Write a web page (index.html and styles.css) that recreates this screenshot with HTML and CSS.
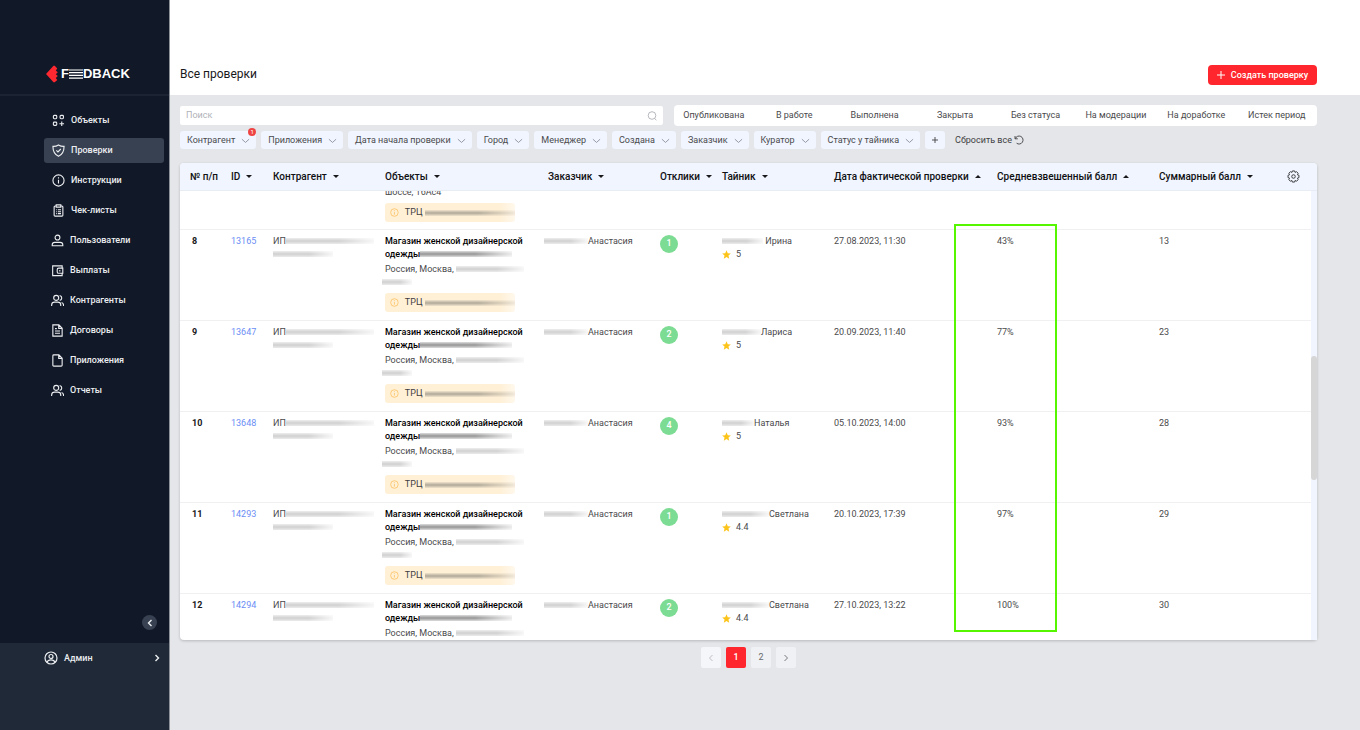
FILE: index.html
```html
<!DOCTYPE html>
<html lang="ru">
<head>
<meta charset="utf-8">
<title>Все проверки</title>
<link rel="stylesheet" href="styles.css">
</head>
<body>
<svg class="defs" width="0" height="0" aria-hidden="true">
  <symbol id="chev" viewBox="0 0 10 6"><path d="M1 1l4 3.600L9 1"/></symbol>
  <symbol id="users" viewBox="0 0 14 14"><circle cx="5.600" cy="4.200" r="2.700"/><path d="M.7 13v-1.200c0-1.900 1.500-3 3.200-3h3.400c1.700 0 3.200 1.100 3.200 3V13M9.300 1.600c1.600.3 2.300 1.300 2.300 2.600s-.7 2.300-2.200 2.700M11.400 9.200c1.400.5 2.100 1.400 2.100 2.800v1"/></symbol>
  <symbol id="info" viewBox="0 0 14 14"><circle cx="7" cy="7" r="6"/><path d="M7 6.300v4M7 3.500v1.400"/></symbol>
  <symbol id="star" viewBox="0 0 10 10"><path d="M5 .3l1.400 3.200 3.400.3-2.600 2.300.8 3.500L5 7.800 2 9.600l.8-3.500L.2 3.800l3.400-.3z"/></symbol>
</svg>
<div class="app">
  <aside class="sidebar">
    <div class="brand">
      <svg class="brand-mark" viewBox="0 0 12 18" aria-hidden="true"><path d="M0 9L7.500.8l1.200 0 2.600 2.600-1.500 2 2 1.900-2 1.900 2 1.900-2 1.800 1.500 2-2.600 2.300H7.500z" fill="#fd2830"/></svg>
      <span class="brand-name">F<svg class="brand-bars" viewBox="0 0 14 10" aria-hidden="true"><path d="M0 1h14M0 3.700h14M0 6.400h14M0 9.100h14" stroke="#fff" stroke-width="1.200"/></svg>DBACK</span>
    </div>
    <nav class="menu">
      <a class="item" href="#"><svg viewBox="0 0 14 14"><rect x="1.500" y="1.500" width="3.600" height="3.600" rx="1"/><rect x="8.700" y="1.500" width="3.600" height="3.600" rx="1"/><rect x="1.500" y="8.700" width="3.600" height="3.600" rx="1"/><path d="M10.500 8v5M8 10.500h5"/></svg>Объекты</a>
      <a class="item active" href="#"><svg viewBox="0 0 14 14"><path d="M7 1c2 1.300 4 1.700 6 1.600 0 5-1.600 8.500-6 10.700C2.600 11.100 1 7.600 1 2.600 3 2.700 5 2.300 7 1zM4.700 6.800L6.400 8.500 9.500 5.400"/></svg>Проверки</a>
      <a class="item" href="#"><svg><use href="#info"/></svg>Инструкции</a>
      <a class="item" href="#"><svg viewBox="0 0 14 14"><path d="M4.500 2.200H3.300c-.6 0-1 .4-1 1V12c0 .6.400 1 1 1h7.400c.6 0 1-.4 1-1V3.200c0-.6-.4-1-1-1H9.500M4.500 1h5v2.400h-5zM4.300 6.200h.8M6.300 6.200h3.400M4.300 8.300h.8M6.300 8.300h3.400M4.300 10.400h.8M6.300 10.400h3.400"/></svg>Чек-листы</a>
      <a class="item near" href="#"><svg viewBox="0 0 14 14"><circle cx="7" cy="3.800" r="2.600"/><path d="M1.300 12.600v-1c0-1.700 1.200-2.600 2.700-2.600h6c1.500 0 2.700.9 2.700 2.600v1z"/></svg>Пользователи</a>
      <a class="item near" href="#"><svg viewBox="0 0 14 14"><path d="M12 4.500V2H1.800v10.500H12V10M12.700 4.500H8.200c-1 0-1.500.6-1.500 1.500v2.500c0 .9.500 1.500 1.500 1.500h4.500zM9.500 6.500v1.500"/></svg>Выплаты</a>
      <a class="item near" href="#"><svg><use href="#users"/></svg>Контрагенты</a>
      <a class="item near" href="#"><svg viewBox="0 0 14 14"><path d="M2 1h6.500L12 4.500V13H2zM8.300 1v3.700H12M4.300 5h2M4.300 7.500h5.400M4.300 10h5.400"/></svg>Договоры</a>
      <a class="item near" href="#"><svg viewBox="0 0 14 14"><path d="M2 2c0-.6.400-1 1-1h5.500L12 4.500V12c0 .6-.4 1-1 1H3c-.6 0-1-.4-1-1zM8.300 1v3.700H12"/></svg>Приложения</a>
      <a class="item near" href="#"><svg><use href="#users"/></svg>Отчеты</a>
    </nav>
    <button class="collapse" aria-label="Свернуть меню"><svg viewBox="0 0 6 8"><path d="M4.500 1L1.500 4l3 3"/></svg></button>
    <div class="account">
      <a href="#"><svg class="avatar" viewBox="0 0 14 14"><circle cx="7" cy="7" r="6"/><circle cx="7" cy="5.500" r="2"/><path d="M3 11.300c.5-1.700 2-2.500 4-2.500s3.500.8 4 2.500"/></svg>Админ<svg class="arrow" viewBox="0 0 6 8"><path d="M1.500 1l3 3-3 3"/></svg></a>
    </div>
  </aside>
  <div class="page">
    <header class="top">
      <h1>Все проверки</h1>
      <button class="create"><svg viewBox="0 0 8 8"><path d="M4 0v8M0 4h8"/></svg>Создать проверку</button>
    </header>
    <main class="content">
      <div class="tools">
        <div class="search"><input type="text" placeholder="Поиск" aria-label="Поиск"><svg viewBox="0 0 10 10"><circle cx="5" cy="4.500" r="3.800"/><path d="M7.800 7.500l1.500 1.800"/></svg></div>
        <div class="statuses"><button>Опубликована</button><button>В работе</button><button>Выполнена</button><button>Закрыта</button><button>Без статуса</button><button>На модерации</button><button>На доработке</button><button>Истек период</button></div>
      </div>
      <div class="filters">
        <button class="filter">Контрагент<svg><use href="#chev"/></svg><span class="count">1</span></button>
        <button class="filter">Приложения<svg><use href="#chev"/></svg></button>
        <button class="filter">Дата начала проверки<svg><use href="#chev"/></svg></button>
        <button class="filter">Город<svg><use href="#chev"/></svg></button>
        <button class="filter">Менеджер<svg><use href="#chev"/></svg></button>
        <button class="filter">Создана<svg><use href="#chev"/></svg></button>
        <button class="filter">Заказчик<svg><use href="#chev"/></svg></button>
        <button class="filter">Куратор<svg><use href="#chev"/></svg></button>
        <button class="filter">Статус у тайника<svg><use href="#chev"/></svg></button>
        <button class="filter plus" aria-label="Добавить фильтр"><svg viewBox="0 0 8 8"><path d="M4 1v6M1 4h6"/></svg></button>
        <button class="reset">Сбросить все<svg viewBox="0 0 10 10"><path d="M1 1v2.800h2.800M1.300 3.600A4 4 0 1 1 2.600 8.200"/></svg></button>
      </div>
      <section class="card">
        <div class="scroller" id="scroller">
          <table>
            <colgroup><col class="c-num"><col class="c-id"><col class="c-firm"><col class="c-obj"><col class="c-firm"><col class="c-resp"><col class="c-firm"><col class="c-obj"><col class="c-avg"><col class="c-sum"><col class="c-gear"></colgroup>
            <thead><tr>
              <th>№ п/п</th><th>ID<i class="sort"></i></th><th>Контрагент<i class="sort"></i></th><th>Объекты<i class="sort"></i></th><th>Заказчик<i class="sort"></i></th><th>Отклики<i class="sort"></i></th><th>Тайник<i class="sort"></i></th><th>Дата фактической проверки<i class="sort up"></i></th><th>Средневзвешенный балл<i class="sort up"></i></th><th>Суммарный балл<i class="sort"></i></th>
              <th><button class="gear" aria-label="Настройки"><svg viewBox="0 0 14 14"><path d="M5.800 1h2.400l.5 1.600 1.600-.8 1.700 1.700-.8 1.600 1.700.6v2.500l-1.700.6.8 1.600-1.700 1.700-1.600-.8-.5 1.700H5.800l-.5-1.700-1.600.8L2 10.400l.8-1.600-1.700-.6V5.700l1.700-.6L2 3.500l1.700-1.700 1.600.8z"/><circle cx="7" cy="7" r="1.900"/></svg></button></th>
            </tr></thead>
            <tbody id="rows"></tbody>
          </table>
        </div>
        <div class="track"><div class="thumb"></div></div>
        <div class="highlight"></div>
      </section>
      <nav class="pager" aria-label="Страницы">
        <button class="off" aria-label="Назад"><svg viewBox="0 0 6 8"><path d="M4.500 1L1.500 4l3 3"/></svg></button>
        <button class="current">1</button>
        <button>2</button>
        <button aria-label="Вперёд"><svg viewBox="0 0 6 8"><path d="M1.500 1l3 3-3 3"/></svg></button>
      </nav>
    </main>
  </div>
</div>
<script src="rows.js"></script>
</body>
</html>
```
FILE: styles.css
```css
* { box-sizing: border-box; }
body { margin: 0; font: 9px/13px Roboto, "Noto Sans", sans-serif; color: #4a4a4c; background: #e5e6ea; }
button, input { font: inherit; color: inherit; border: 0; padding: 0; background: none; }
a { color: inherit; text-decoration: none; }
svg { fill: none; stroke: currentColor; }
.defs { position: absolute; }
.app { display: flex; height: 100vh; }

.sidebar { width: 170px; flex: none; display: flex; flex-direction: column; background: #111827; color: #eceef1; border-right: 1px solid #8d9199; }
.brand { height: 96px; display: flex; align-items: center; gap: 3px; padding: 54px 0 0 46px; border-bottom: 2px solid #1c2433; color: #fff; }
.brand-mark { width: 12px; height: 18px; stroke: none; }
.brand-name { display: flex; align-items: center; font: bold 13px/18px "Liberation Sans", sans-serif; }
.brand-bars { width: 14px; height: 10px; }
.menu { display: flex; flex-direction: column; gap: 5px; padding: 12px 5px 0 44px; }
.item { display: flex; align-items: center; gap: 6px; height: 25px; padding-left: 8px; border-radius: 3px; font-weight: 500; }
.item.near { padding-left: 7px; }
.item svg { width: 13px; height: 13px; stroke-width: 1.2; overflow: visible; }
.item.active { background: #374151; }
.collapse { align-self: flex-end; margin: auto 12px 13px 0; width: 15px; height: 15px; border-radius: 50%; background: #374151; display: grid; place-items: center; }
.collapse svg, .arrow { width: 6px; height: 8px; stroke-width: 1.4; }
.account { height: 87px; background: #1f2937; }
.account a { display: flex; align-items: center; gap: 6px; padding: 8px 9px 0 44px; font-weight: 500; }
.avatar { width: 14px; height: 14px; stroke-width: 1.2; }
.arrow { margin-left: auto; }

.page { flex: 1; min-width: 0; display: flex; flex-direction: column; }
.top { height: 95px; background: #fff; display: flex; align-items: flex-start; justify-content: space-between; padding: 65px 43px 0 10px; flex: none; }
.top h1 { margin: 1px 0 0; font-size: 12px; line-height: 16px; font-weight: 400; color: #18181b; }
.create { display: flex; align-items: center; justify-content: center; gap: 6px; height: 20px; width: 109px; border-radius: 4px; background: #ff262d; color: #fff; font-weight: 500; }
.create svg { width: 8px; height: 8px; }
.content { flex: 1; min-height: 0; display: flex; flex-direction: column; padding: 10px 43px 62px 10px; }
.tools { display: grid; grid-template-columns: 3fr 4fr; gap: 11px; align-items: center; height: 21px; }
.search { display: flex; align-items: center; height: 19px; padding: 0 6px; background: #fff; border-radius: 2px; }
.search input { flex: 1; min-width: 0; outline: 0; }
.search input::placeholder { color: #b0b2b8; }
.search svg { width: 10px; height: 10px; color: #a4a6ac; stroke-width: 0.8; }
.statuses { display: grid; grid-template-columns: repeat(8, 1fr); height: 21px; background: #fff; border-radius: 4px; }
.filters { display: flex; gap: 5px; margin-top: 5px; height: 18px; align-items: center; }
.filter { position: relative; display: flex; align-items: center; gap: 6px; height: 18px; padding: 0 6px 0 7px; border-radius: 3px; background: #f0f5ff; white-space: nowrap; }
.filter svg { width: 9px; height: 6px; color: #85878e; margin-top: 2px; stroke-width: 0.9; }
.filter.plus svg { width: 8px; height: 8px; margin: 0; color: #444; }
.filter.plus { padding: 0 6px; }
.count { position: absolute; right: 0; top: -3px; width: 8px; height: 8px; border-radius: 50%; background: #ef4444; color: #fff; font-size: 6px; line-height: 8px; text-align: center; }
.reset { display: flex; align-items: center; gap: 2px; margin-left: 5px; color: #3f3f42; }
.reset svg { width: 10px; height: 10px; stroke-width: 0.9; }

.card { position: relative; flex: 1; min-height: 0; margin-top: 14px; background: #fff; border-radius: 4px; box-shadow: 0 1px 3px rgba(0, 0, 0, 0.2); }
.scroller { height: 100%; overflow: auto; border-radius: 4px; scrollbar-width: none; }
table { width: 100%; table-layout: fixed; border-collapse: separate; border-spacing: 0; }
.c-num { width: 41px; }
.c-id { width: 42px; }
.c-firm { width: 112px; }
.c-obj { width: 163px; }
.c-resp { width: 62px; }
.c-avg { width: 162px; }
.c-sum { width: 128px; }
.c-gear { width: 40px; }
th { position: sticky; top: 0; z-index: 1; height: 28px; padding: 0 0 0 10px; background: #f0f5ff; border-bottom: 1px solid #e8ecf3; text-align: left; font-size: 10px; font-weight: 500; color: #111113; white-space: nowrap; }
.sort { display: inline-block; margin-left: 6px; vertical-align: 2px; border: solid transparent; border-width: 3px 3px 0; border-top-color: #18181b; }
.sort.up { border-width: 0 3px 3px; border-bottom-color: #18181b; }
.gear { display: block; height: 14px; }
.gear svg { display: block; width: 13px; height: 13px; color: #333; stroke-width: 1; stroke-linejoin: round; }
td { height: 91px; padding: 5px 0 7px 10px; border-bottom: 1px solid #f0f0f2; vertical-align: top; white-space: nowrap; }
td.rest { vertical-align: bottom; }
td a { color: #6b8ef5; }
.num { padding-left: 12px; font-weight: 700; color: #18181b; }
.title { height: 26px; font-weight: 500; color: #000; }
.address { height: 26px; margin-top: 2px; }
.rest .address { height: 13px; }
.tag { display: flex; align-items: center; width: 130px; height: 19px; margin-top: 4px; padding-left: 5px; border-radius: 3px; background: linear-gradient(90deg, #fff0d6 88%, #fff8ec); color: #3f3f42; }
.tag svg { width: 9px; height: 9px; margin-right: 6px; color: #fbbf5a; stroke-width: 1.2; }
.smudge { display: inline-block; height: 6px; background: linear-gradient(#eee, #d0d0d0 50%, #ebebeb); -webkit-mask: linear-gradient(90deg, #000 60%, rgba(0, 0, 0, 0.2)); }
.smudge.dark { background: linear-gradient(#ddd, #959595 50%, #ddd); }
.smudge.warm { width: 92px; margin-left: 2px; background: linear-gradient(#f2e4cd, #b0a898 50%, #f2e4cd); }
.w-firm { width: 88px; }
.w-firm2 { width: 60px; }
.w-shop { width: 92px; }
.w-addr { width: 68px; }
.w-addr2 { width: 30px; margin-left: -3px; }
.w-client { width: 44px; margin-left: -4px; }
.badge { display: block; width: 18px; height: 18px; border-radius: 50%; background: #7ddc93; color: #fff; text-align: center; line-height: 17px; font-weight: 500; }
.rating { display: flex; align-items: center; gap: 5px; }
.rating svg { width: 9px; height: 9px; fill: #fcc419; stroke: none; overflow: visible; }
.track { position: absolute; right: 0; top: 28px; bottom: 0; width: 6px; background: #f0f5ff; }
.thumb { height: 27.6%; margin-top: 165px; border-radius: 3px; background: #d6d6d6; }
.highlight { position: absolute; z-index: 2; left: 68.1%; top: 61px; bottom: 8px; width: 103px; border: 2px solid #56f500; }
.pager { display: flex; justify-content: center; gap: 5px; padding: 7px 0 0; }
.pager button { width: 20px; height: 21px; display: grid; place-items: center; border-radius: 2px; background: #f0f1f5; color: #6a6a6e; }
.pager svg { width: 6px; height: 8px; stroke-width: 0.9; }
.pager .current { background: #ff262d; color: #fff; font-weight: 500; }
.pager .off { background: #f5f6fa; color: #b5b6bb; }
```
FILE: rows.js
```js
const checks = [
  { n: 8, id: '13165', replies: 1, name: ' Ирина', blur: 41, rate: '5', date: '27.08.2023, 11:30', avg: '43%', sum: 13 },
  { n: 9, id: '13647', replies: 2, name: 'Лариса', blur: 39, rate: '5', date: '20.09.2023, 11:40', avg: '77%', sum: 23 },
  { n: 10, id: '13648', replies: 4, name: 'Наталья', blur: 32, rate: '5', date: '05.10.2023, 14:00', avg: '93%', sum: 28 },
  { n: 11, id: '14293', replies: 1, name: 'Светлана', blur: 47, rate: '4.4', date: '20.10.2023, 17:39', avg: '97%', sum: 29 },
  { n: 12, id: '14294', replies: 2, name: 'Светлана', blur: 47, rate: '4.4', date: '27.10.2023, 13:22', avg: '100%', sum: 30 }
];
const smudge = (kind) => `<span class="smudge ${kind}"></span>`;
const tag = `<div class="tag"><svg><use href="#info"/></svg>ТРЦ${smudge('warm')}</div>`;
const first = `<tr><td></td><td></td><td></td>
  <td class="rest"><div class="address">шоссе, 16Ас4</div>${tag}</td>
  <td></td><td></td><td></td><td></td><td></td><td></td><td></td></tr>`;
document.getElementById('rows').innerHTML = first + checks.map((c) => `<tr>
  <td class="num">${c.n}</td>
  <td><a href="#">${c.id}</a></td>
  <td>ИП${smudge('w-firm')}<br>${smudge('w-firm2')}</td>
  <td><div class="title">Магазин женской дизайнерской<br>одежды${smudge('dark w-shop')}</div>
    <div class="address">Россия, Москва, ${smudge('w-addr')}<br>${smudge('w-addr2')}</div>
    ${tag}</td>
  <td>${smudge('w-client')}Анастасия</td>
  <td><span class="badge">${c.replies}</span></td>
  <td><span class="smudge" style="width:${c.blur}px"></span>${c.name}<div class="rating"><svg viewBox="0 0 10 10"><use href="#star"/></svg>${c.rate}</div></td>
  <td>${c.date}</td><td>${c.avg}</td><td>${c.sum}</td><td></td>
</tr>`).join('');
document.getElementById('scroller').scrollTop = 52;
```
